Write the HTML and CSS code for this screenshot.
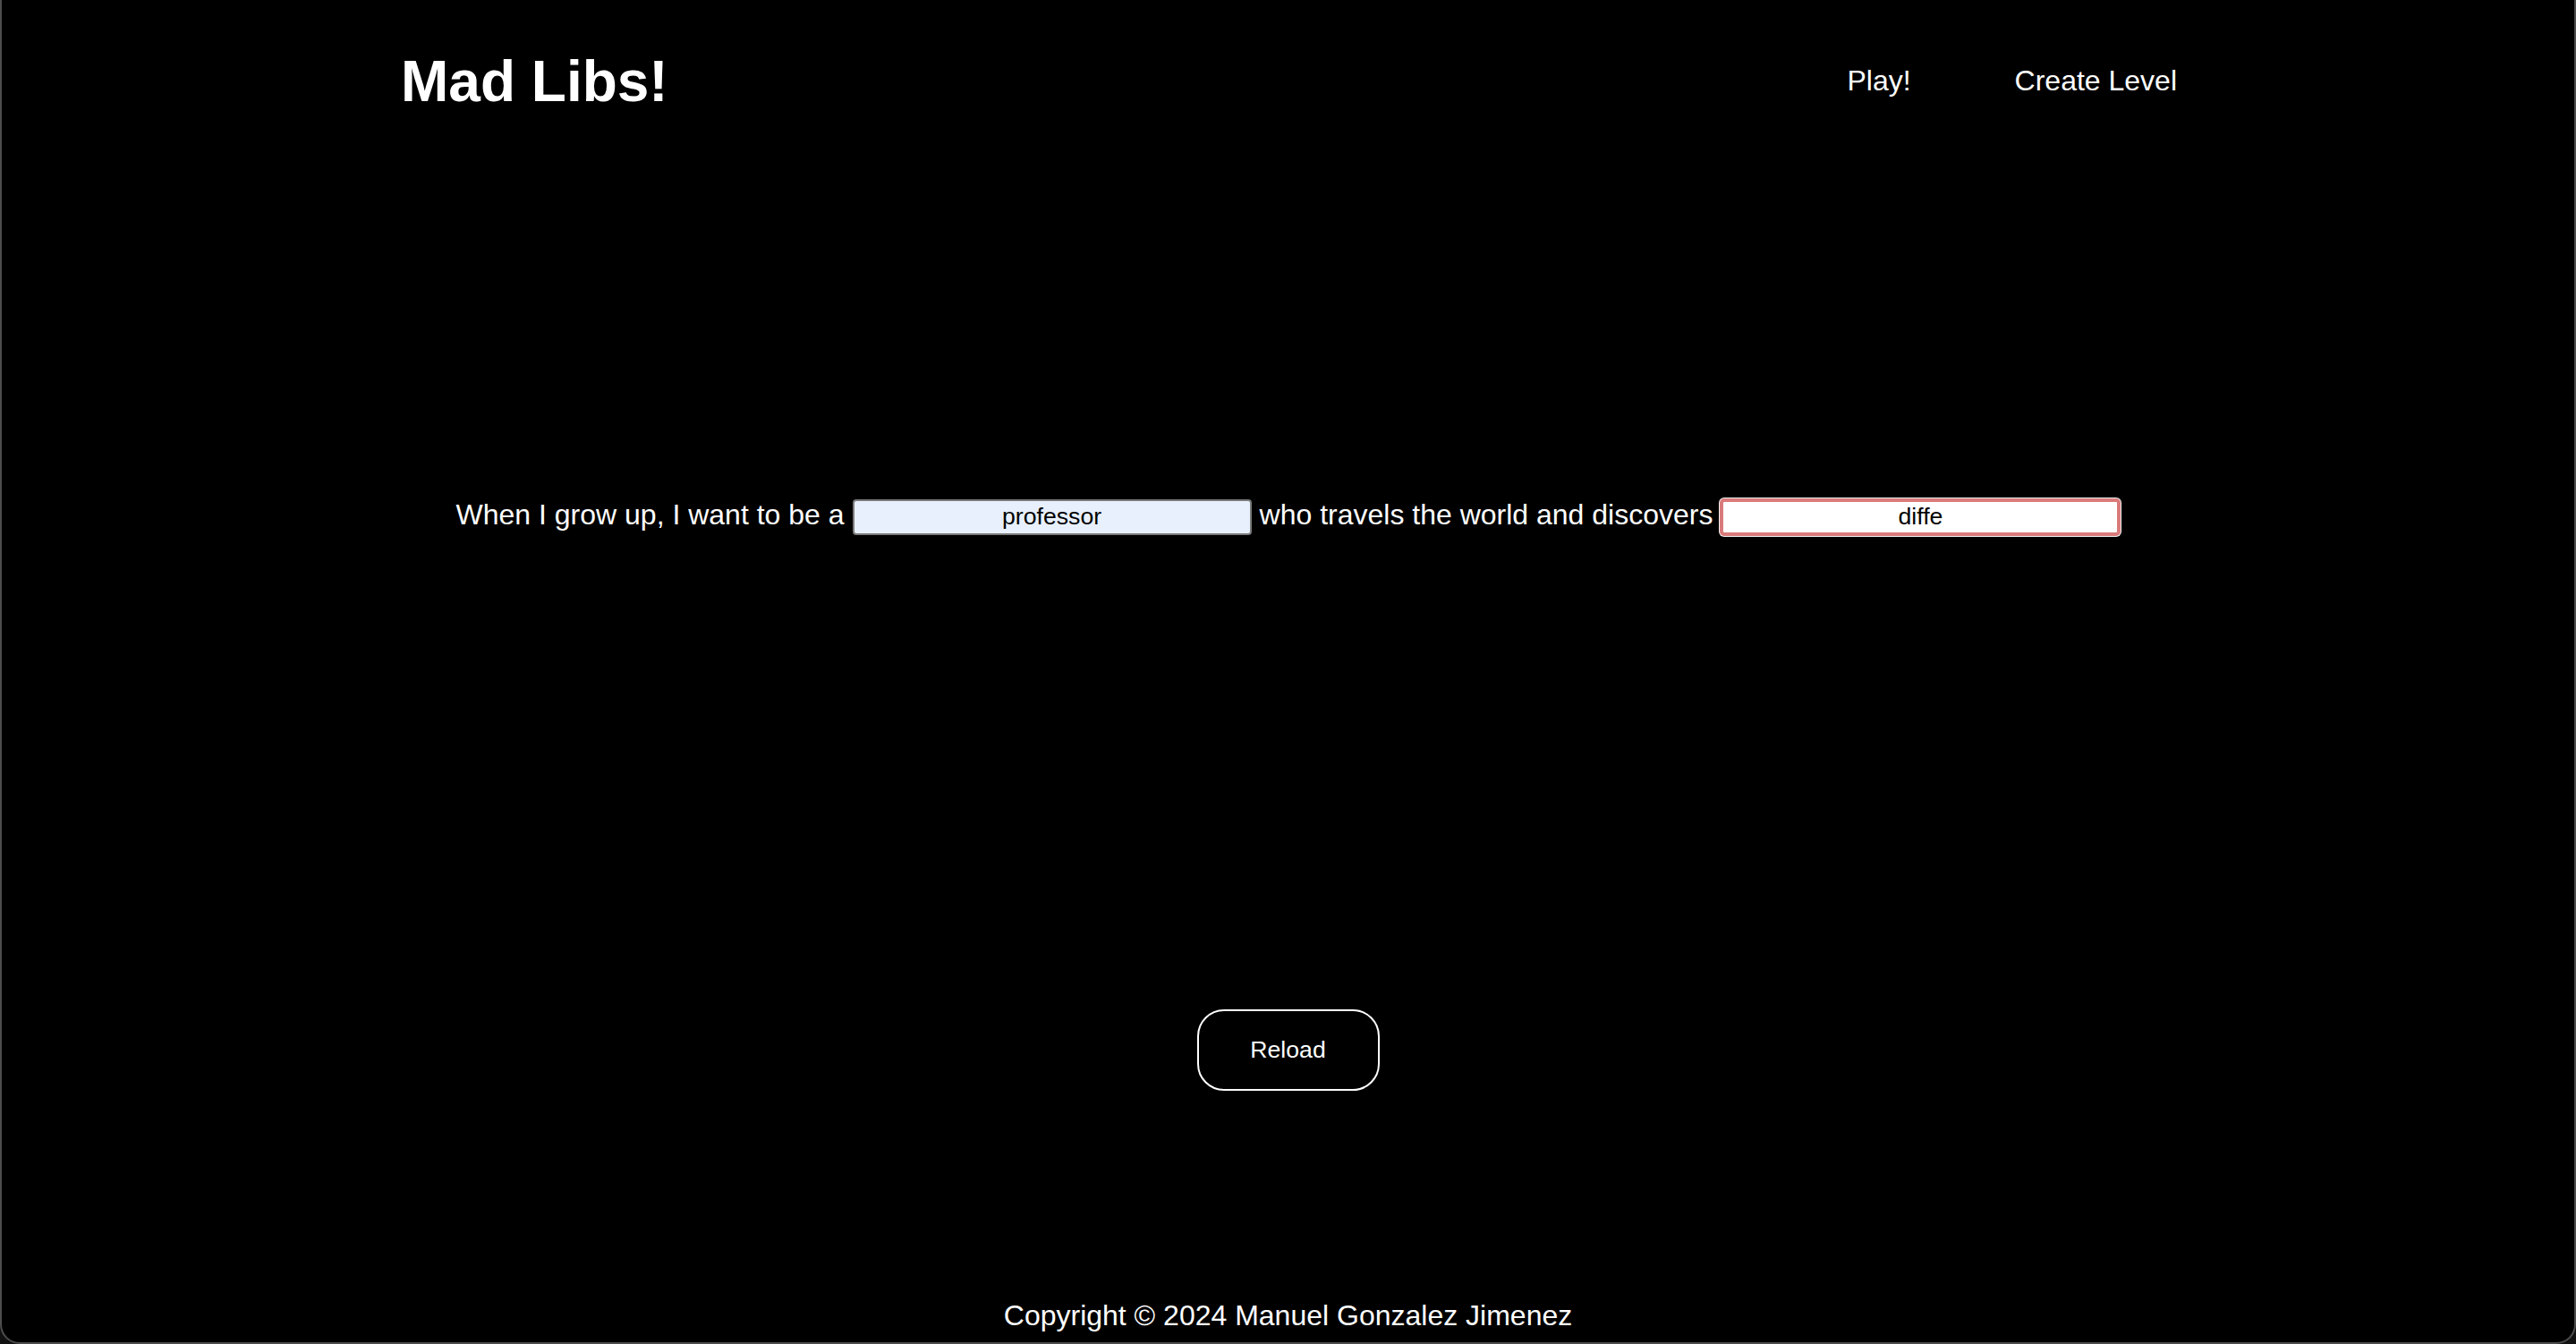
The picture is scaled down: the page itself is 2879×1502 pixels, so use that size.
FILE: index.html
```html
<!DOCTYPE html>
<html lang="en">
<head>
<meta charset="utf-8">
<title>Mad Libs!</title>
<link rel="stylesheet" href="styles.css">
</head>
<body>
<div class="window">
  <header class="header">
    <h1 class="title">Mad Libs!</h1>
    <nav class="nav">
      <a class="nav-link" href="#">Play!</a>
      <a class="nav-link" href="#">Create Level</a>
    </nav>
  </header>
  <main class="main">
    <div class="sentence">
      <span class="text">When I grow up, I want to be a</span>
      <input class="blank" type="text" value="professor">
      <span class="text">who travels the world and discovers</span>
      <input class="blank blank-error" type="text" value="diffe">
    </div>
    <button class="reload" type="button">Reload</button>
  </main>
  <footer class="footer">Copyright © 2024 Manuel Gonzalez Jimenez</footer>
</div>
</body>
</html>
```
FILE: styles.css
```css
html, body {
  margin: 0;
  padding: 0;
  background: #111;
}

body {
  font-family: "Liberation Sans", Arial, Helvetica, sans-serif;
  color: #fff;
}

.window {
  box-sizing: border-box;
  height: 1502px;
  background: #000;
  border: 2px solid #4d4d4d;
  border-top: none;
  border-radius: 0 0 22px 22px;
  display: flex;
  flex-direction: column;
}

.header {
  display: flex;
  justify-content: space-between;
  align-items: center;
  padding: 54px 444px 0 446px;
}

.title {
  margin: 0;
  font-size: 64px;
  line-height: 74px;
  font-weight: bold;
}

.nav {
  display: flex;
  gap: 116px;
  margin-top: -2px;
}

.nav-link {
  color: #fff;
  text-decoration: none;
  font-size: 32px;
  line-height: 37px;
}

.main {
  display: flex;
  flex-direction: column;
  align-items: center;
}

.sentence {
  margin-top: 429px;
  display: flex;
  align-items: baseline;
  justify-content: center;
  gap: 9px;
}

.text {
  font-size: 32px;
  line-height: 36px;
}

.blank {
  box-sizing: border-box;
  width: 446px;
  height: 40px;
  padding: 0 4px;
  border: 2px solid #7a7a7a;
  border-radius: 4px;
  background: #e8f0fe;
  color: #000;
  font-family: "Liberation Sans", Arial, sans-serif;
  font-size: 26.67px;
  text-align: center;
  outline: none;
}

.blank-error {
  background: #fff;
  border: 3px solid #d97b7b;
  box-shadow: 0 0 0 1px #d97b7b, 0 0 0 2px #f4f4f4;
}

.reload {
  margin-top: 530px;
  box-sizing: border-box;
  width: 204px;
  height: 91px;
  background: #000;
  color: #fff;
  border: 2px solid #fff;
  border-radius: 30px;
  font-family: "Liberation Sans", Arial, sans-serif;
  font-size: 26.67px;
  cursor: pointer;
}

.footer {
  margin-top: auto;
  padding-bottom: 11px;
  text-align: center;
  font-size: 32px;
  line-height: 37px;
}
```
